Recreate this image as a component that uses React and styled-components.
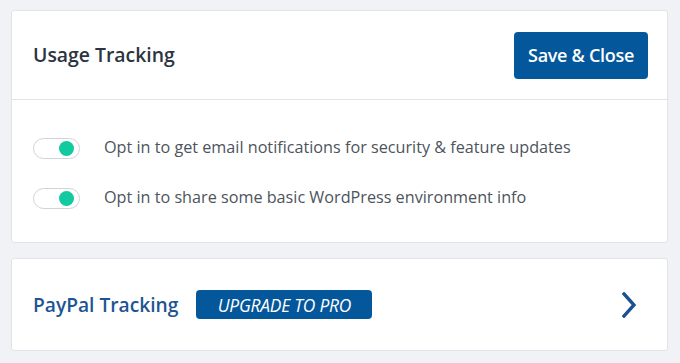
import React, { useState } from "react";
import styled, { createGlobalStyle } from "styled-components";

const GlobalStyle = createGlobalStyle`
  html, body {
    margin: 0;
    padding: 0;
    background: #f1f2f6;
  }
  body {
    font-family: "Open Sans", "Noto Sans", sans-serif;
  }
`;

const options = [
  { id: "email", label: "Opt in to get email notifications for security & feature updates" },
  { id: "env", label: "Opt in to share some basic WordPress environment info" },
];

const App = () => {
  const [checked, setChecked] = useState({ email: true, env: true });

  const toggle = (id) => setChecked((prev) => ({ ...prev, [id]: !prev[id] }));

  return (
    <Page>
      <GlobalStyle />
      <Card>
        <CardHeader>
          <Title>Usage Tracking</Title>
          <PrimaryButton>Save &amp; Close</PrimaryButton>
        </CardHeader>
        <CardBody>
          {options.map((opt) => (
            <OptionRow key={opt.id}>
              <Switch $on={checked[opt.id]} onClick={() => toggle(opt.id)}>
                <Knob $on={checked[opt.id]} />
              </Switch>
              <OptionLabel>{opt.label}</OptionLabel>
            </OptionRow>
          ))}
        </CardBody>
      </Card>

      <Card>
        <ProRow>
          <ProTitle>PayPal Tracking</ProTitle>
          <UpgradeBadge>Upgrade to Pro</UpgradeBadge>
          <Chevron viewBox="0 0 14 26" aria-hidden="true">
            <path d="M2 2 L12 13 L2 24" />
          </Chevron>
        </ProRow>
      </Card>
    </Page>
  );
};

const Page = styled.div`
  display: flex;
  flex-direction: column;
  gap: 15px;
  padding: 10px 12px 11px 11px;
  height: 363px;
  box-sizing: border-box;
`;

const Card = styled.div`
  background: #ffffff;
  border: 1px solid #e1e3e8;
  border-radius: 3px;
`;

const CardHeader = styled.div`
  display: flex;
  align-items: center;
  justify-content: space-between;
  height: 88px;
  padding: 0 19px 0 21px;
  border-bottom: 1px solid #e1e3e8;
`;

const Title = styled.h2`
  margin: 0 0 2px;
  font-size: 19.4px;
  font-weight: 600;
  color: #2b3440;
`;

const PrimaryButton = styled.button`
  height: 47px;
  width: 134px;
  border: none;
  border-radius: 4px;
  background: #04579b;
  color: #ffffff;
  font-family: inherit;
  font-size: 18px;
  font-weight: 600;
  letter-spacing: -0.3px;
  cursor: pointer;
`;

const CardBody = styled.div`
  display: flex;
  flex-direction: column;
  gap: 30px;
  padding: 38px 21px 34px;
`;

const OptionRow = styled.div`
  display: flex;
  align-items: center;
  height: 20px;
`;

const Switch = styled.span`
  position: relative;
  flex: none;
  width: 45px;
  height: 19px;
  border: 1px solid #d0d3d8;
  border-radius: 11px;
  background: #ffffff;
  margin-right: 24px;
  cursor: pointer;
`;

const Knob = styled.span`
  position: absolute;
  top: 2px;
  left: ${(p) => (p.$on ? "25px" : "3px")};
  width: 15px;
  height: 15px;
  border-radius: 50%;
  background: ${(p) => (p.$on ? "#12c9a0" : "#c3c7cc")};
`;

const OptionLabel = styled.span`
  font-size: 16.2px;
  color: #4d545c;
  margin-bottom: 2px;
`;

const ProRow = styled.div`
  display: flex;
  align-items: center;
  height: 91px;
  padding: 0 31px 0 21px;
`;

const ProTitle = styled.h3`
  margin: 0 18px 0 0;
  font-size: 19.2px;
  font-weight: 600;
  color: #1d5592;
`;

const UpgradeBadge = styled.span`
  display: inline-flex;
  align-items: center;
  justify-content: center;
  width: 176px;
  height: 29px;
  border-radius: 4px;
  background: #04579b;
  color: #ffffff;
  font-size: 17.4px;
  font-style: italic;
  text-transform: uppercase;
  letter-spacing: -0.2px;
`;

const Chevron = styled.svg`
  margin-left: auto;
  width: 14px;
  height: 26px;
  fill: none;
  stroke: #1b5190;
  stroke-width: 3.4;
  stroke-linecap: square;
`;

export default App;
